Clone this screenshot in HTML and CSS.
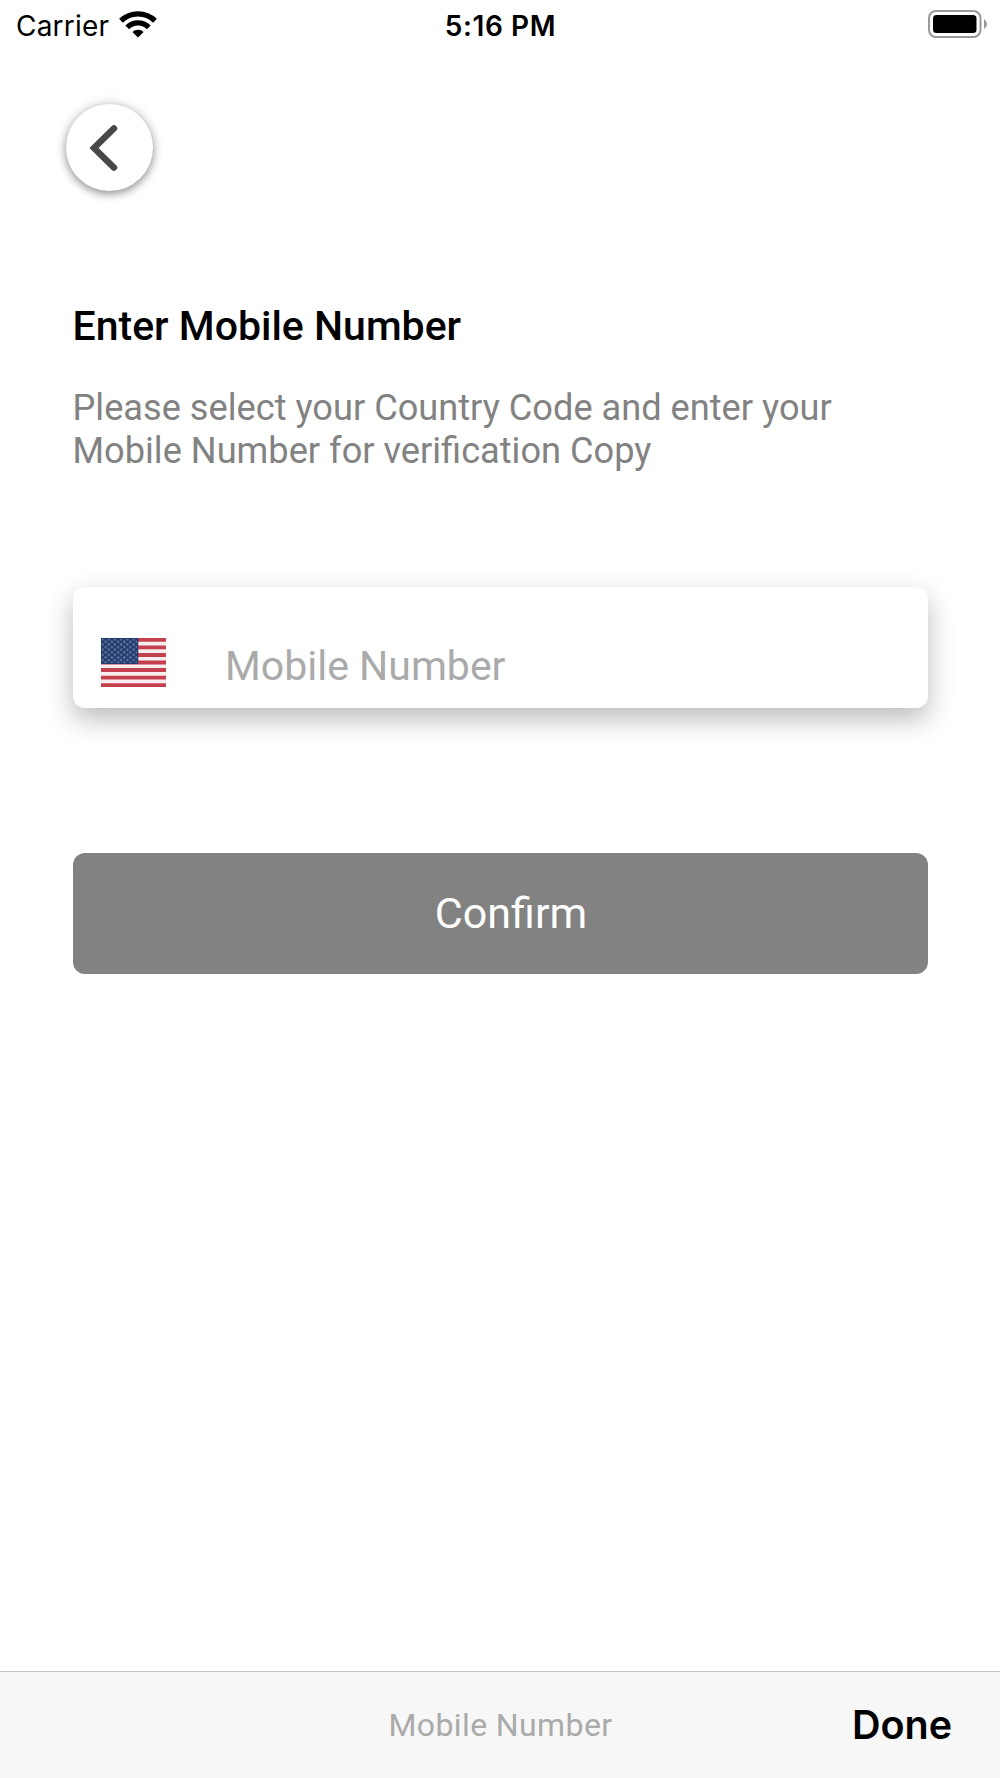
FILE: index.html
```html
<!DOCTYPE html>
<html lang="en">
<head>
<meta charset="utf-8">
<title>Enter Mobile Number</title>
<link rel="stylesheet" href="styles.css">
</head>
<body>
<div class="screen">
  <div class="statusbar">
    <div class="status-left">
      <span class="carrier">Carrier</span>
      <svg class="wifi" width="38" height="28" viewBox="0 0 38 28">
        <path d="M2 10.8A24.4 24.4 0 0 1 36 10.8M8.2 17.3A15.3 15.3 0 0 1 29.8 17.3" fill="none" stroke="#000" stroke-width="5.4"/>
        <path d="M19 27.6L13.4 22A8 8 0 0 1 24.6 22Z"/>
      </svg>
    </div>
    <div class="time">5:16 PM</div>
    <div class="status-right">
      <svg class="battery" width="60" height="28" viewBox="0 0 60 28">
        <rect x="1" y="1" width="51.5" height="26" rx="7" fill="none" stroke="#999" stroke-width="2"/>
        <rect x="5" y="5" width="43.5" height="18" rx="3.5"/>
        <path d="M56 9Q59 11 59 14Q59 17 56 19Z" fill="#999"/>
      </svg>
    </div>
  </div>

  <div class="content">
    <button class="back" type="button" aria-label="Back">
      <svg width="40" height="50" viewBox="0 0 40 50">
        <path d="M29 5.4L9 25L29 44.6" fill="none" stroke="#484848" stroke-width="6.4" stroke-linecap="round"/>
      </svg>
    </button>

    <h1 class="title">Enter Mobile Number</h1>
    <p class="hint">Please select your Country Code and enter your<br>Mobile Number for verification Copy</p>

    <div class="phone">
      <svg class="flag" width="65" height="49" viewBox="0 0 65 49">
        <defs>
          <pattern id="stars" width="6.2" height="5.2" patternUnits="userSpaceOnUse">
            <circle cx="1.6" cy="1.3" r="1.2" fill="#62789f"/>
            <circle cx="4.7" cy="3.9" r="1.2" fill="#62789f"/>
          </pattern>
        </defs>
        <rect width="65" height="49" fill="#f7ecee"/>
        <path d="M0 1.9H65M0 9.4H65M0 17H65M0 24.5H65M0 32H65M0 39.6H65M0 47.1H65" stroke="#c4404c" stroke-width="3.9"/>
        <rect width="37.3" height="26" fill="#233c6f"/>
        <rect x="1" y="1" width="35" height="24" fill="url(#stars)"/>
      </svg>
      <span class="placeholder">Mobile Number</span>
    </div>

    <button class="confirm" type="button">Confirm</button>
  </div>

  <div class="toolbar">
    <span></span>
    <span class="toolbar-title">Mobile Number</span>
    <span class="done">Done</span>
  </div>
</div>
</body>
</html>
```
FILE: styles.css
```css
* {
    box-sizing: border-box;
}

body {
    margin: 0;
    background: #fff;
    font-family: Roboto, sans-serif;
}

.screen {
    display: flex;
    flex-direction: column;
    height: 1778px;
}

.statusbar {
    display: grid;
    grid-template-columns: 1fr auto 1fr;
    align-items: center;
    height: 50px;
    padding: 0 12px 2px 16px;
    font-family: Inter, sans-serif;
    font-size: 28px;
}

.status-left {
    display: flex;
    align-items: center;
    gap: 10px;
}

.carrier {
    padding-top: 3px;
    letter-spacing: 0.2px;
}

.time {
    margin-left: -3px;
    padding-top: 3px;
    font-weight: 600;
    letter-spacing: 0.6px;
}

.status-right {
    display: flex;
    justify-content: flex-end;
}

.content {
    flex: 1;
    padding: 54px 72.5px 0;
}

.back {
    display: flex;
    align-items: center;
    justify-content: center;
    width: 87px;
    height: 87px;
    margin-left: -7px;
    padding: 0 9px 0 0;
    border: 0;
    border-radius: 50%;
    background: #fff;
    box-shadow: 0 3px 8px rgba(0, 0, 0, 0.38), 0 0 14px rgba(0, 0, 0, 0.12);
}

.title {
    margin: 111px 0 0;
    font-size: 41px;
    font-weight: 500;
    line-height: 48px;
}

.hint {
    margin: 36px 0 0;
    color: #828282;
    font-size: 36.2px;
    line-height: 43px;
}

.phone {
    display: flex;
    align-items: center;
    height: 121px;
    margin-top: 115px;
    padding: 30px 28px 0;
    border-radius: 12px;
    background: #fff;
    box-shadow: 0 11px 27px rgba(30, 30, 40, 0.3);
}

.placeholder {
    margin-left: 59.5px;
    padding-top: 6px;
    color: #aaa;
    font-size: 41px;
}

.confirm {
    display: block;
    width: 100%;
    height: 121px;
    margin-top: 145px;
    padding: 0 0 2px 22px;
    border: 0;
    border-radius: 12px;
    background: #828282;
    color: #fff;
    font-family: inherit;
    font-size: 43px;
}

.toolbar {
    display: grid;
    grid-template-columns: 1fr auto 1fr;
    align-items: center;
    height: 107px;
    padding: 0 48px 0 49px;
    border-top: 1px solid #c2c2c2;
    background: #f7f7f7;
}

.toolbar-title {
    color: #aaa;
    font-size: 32px;
    letter-spacing: 0.4px;
}

.done {
    font-family: Inter, sans-serif;
    font-size: 39.5px;
    font-weight: 600;
    text-align: right;
}
```
